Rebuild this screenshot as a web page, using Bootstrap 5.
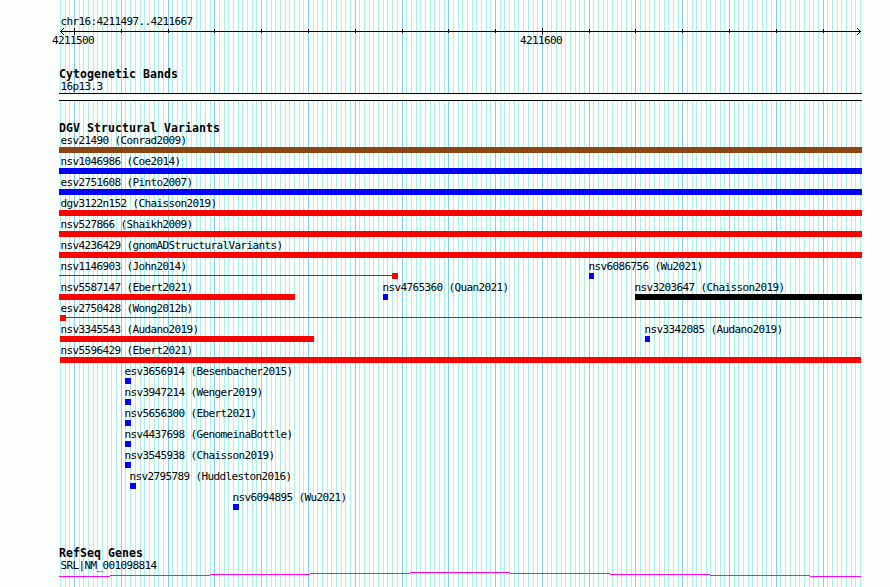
<!DOCTYPE html>
<html lang="en">
<head>
  <meta charset="UTF-8">
  <meta name="viewport" content="width=device-width, initial-scale=1">
  <title>chr16:4211497..4211667</title>
  <link href="https://cdn.jsdelivr.net/npm/bootstrap@5.3.3/dist/css/bootstrap.min.css" rel="stylesheet">
  <style>
    body {
      background-color: #fcfefc;
      color: #000;
      font-family: "DejaVu Sans Mono", monospace;
      font-size: 11px;
      line-height: 12px;
      letter-spacing: -0.622px;
    }

    .browser {
      width: 890px;
      height: 587px;
      padding-left: 59px;
    }

    .panel {
      width: 803px;
    }

    .grid-lines {
      z-index: 0;
    }

    .region {
      height: 28px;
      padding: 16px 0 0 1.4px;
    }

    .ruler {
      height: 41px;
    }

    .track-title {
      margin-bottom: 1px;
      font-size: 11.5px;
      font-weight: bold;
      line-height: 11px;
      letter-spacing: 0.077px;
    }

    .track-label {
      padding-left: 1.4px;
    }

    .cyto-band {
      height: 8px;
      margin-bottom: 22px;
      background-color: #fcfefc;
      border: solid #000;
      border-width: 1px 0;
    }

    .lane {
      height: 21px;
    }

    .feature {
      top: 0;
    }

    .feature-name {
      text-indent: 0.4px;
    }

    .feature-bar {
      height: 6px;
    }

    .gap-line {
      top: 14px;
      height: 1px;
      background-color: #f00;
    }

    .genes {
      margin-top: 35px;
    }

    .gene-line {
      margin-top: -1px;
    }
  </style>
</head>
<body>

  <div class="browser position-relative overflow-hidden">
    <svg class="grid-lines position-absolute top-0 start-0" id="grid" width="890" height="587" shape-rendering="crispEdges"></svg>

    <div class="panel position-relative">
      <div class="region text-nowrap">chr16:4211497..4211667</div>
      <svg class="ruler d-block overflow-visible" id="ruler" width="803" height="41" shape-rendering="crispEdges"></svg>

      <!-- Cytogenetic bands -->
      <div class="track-title">Cytogenetic Bands</div>
      <div class="track-label">16p13.3</div>
      <div class="cyto-band"></div>

      <!-- Structural variants -->
      <div class="track-title">DGV Structural Variants</div>
      <div id="variants"></div>

      <!-- Genes -->
      <div class="genes">
        <div class="track-title">RefSeq Genes</div>
        <div class="track-label">SRL|NM_001098814</div>
        <svg class="gene-line d-block" width="803" height="16" shape-rendering="crispEdges">
          <path fill="#f0f" d="M0 5h51v1H0zM51 4h100v1H51zM151 3h100v1H151zM251 2h100v1H251zM351 1h100v1H351zM451 2h100v1H451zM551 3h100v1H551zM651 4h100v1H651zM751 5h51v1H751z"/>
        </svg>
      </div>
    </div>
  </div>

  <script>
    const start = 4211497;
    const scale = 800 / 171;

    // one entry per lane; x, w are measured from the panel's left edge
    const lanes = [
      [{ name: 'esv21490 (Conrad2009)', x: 0, w: 803, color: '#8b4513' }],
      [{ name: 'nsv1046986 (Coe2014)', x: 0, w: 803, color: '#00f' }],
      [{ name: 'esv2751608 (Pinto2007)', x: 0, w: 803, color: '#00f' }],
      [{ name: 'dgv3122n152 (Chaisson2019)', x: 0, w: 803, color: '#f00' }],
      [{ name: 'nsv527866 (Shaikh2009)', x: 0, w: 803, color: '#f00' }],
      [{ name: 'nsv4236429 (gnomADStructuralVariants)', x: 0, w: 803, color: '#f00' }],
      [{ name: 'nsv1146903 (John2014)', x: 333, w: 6, label: 1, line: [0, 333], color: '#f00' },
       { name: 'nsv6086756 (Wu2021)', x: 530, w: 5, label: 529, color: '#00f' }],
      [{ name: 'nsv5587147 (Ebert2021)', x: 0, w: 236, color: '#f00' },
       { name: 'nsv4765360 (Quan2021)', x: 324, w: 5, label: 323, color: '#00f' },
       { name: 'nsv3203647 (Chaisson2019)', x: 576, w: 227, label: 575, color: '#000' }],
      [{ name: 'esv2750428 (Wong2012b)', x: 1, w: 6, label: 1, line: [7, 796], color: '#f00' }],
      [{ name: 'nsv3345543 (Audano2019)', x: 1, w: 254, label: 1, color: '#f00' },
       { name: 'nsv3342085 (Audano2019)', x: 586, w: 5, label: 585, color: '#00f' }],
      [{ name: 'nsv5596429 (Ebert2021)', x: 1, w: 801, label: 1, color: '#f00' }],
      [{ name: 'esv3656914 (Besenbacher2015)', x: 66, w: 6, label: 65, color: '#00f' }],
      [{ name: 'nsv3947214 (Wenger2019)', x: 66, w: 6, label: 65, color: '#00f' }],
      [{ name: 'nsv5656300 (Ebert2021)', x: 66, w: 6, label: 65, color: '#00f' }],
      [{ name: 'nsv4437698 (GenomeinaBottle)', x: 66, w: 6, label: 65, color: '#00f' }],
      [{ name: 'nsv3545938 (Chaisson2019)', x: 66, w: 6, label: 65, color: '#00f' }],
      [{ name: 'nsv2795789 (Huddleston2016)', x: 71, w: 6, label: 70, color: '#00f' }],
      [{ name: 'nsv6094895 (Wu2021)', x: 174, w: 6, label: 173, color: '#00f' }]
    ];

    function drawGrid() {
      let lines = '';
      for (let i = 0; i <= 171; i++) {
        const x = Math.round(60 + i * scale);
        const color = (start + i) % 10 === 0 ? '#84ceec' : '#acf0ec';
        lines += `<rect x="${x}" y="0" width="1" height="587" fill="${color}"/>`;
      }
      document.getElementById('grid').innerHTML = lines;
    }

    function drawRuler() {
      let marks = '<path d="M1 3h801v1H1z"/>';
      // arrow heads
      for (let k = 1; k < 4; k++) {
        marks += `<path d="M${1 + k} ${3 - k}h1v1h-1zM${1 + k} ${3 + k}h1v1h-1zM${801 - k} ${3 - k}h1v1h-1zM${801 - k} ${3 + k}h1v1h-1z"/>`;
      }
      for (let i = 3; i <= 171; i += 10) {
        const x = Math.round(60 + i * scale) - 59;
        const major = (start + i) % 100 === 0;
        marks += `<rect x="${x}" y="${major ? 0 : 1}" width="1" height="${major ? 7 : 4}"/>`;
        if (major) {
          marks += `<text x="${x - 22}" y="16">${start + i}</text>`;
        }
      }
      document.getElementById('ruler').innerHTML = marks;
    }

    function drawVariants() {
      document.getElementById('variants').innerHTML = lanes.map(lane => {
        const items = lane.map(f => {
          const label = f.label === undefined ? 1 : f.label;
          const line = f.line ? `<div class="gap-line position-absolute" style="left:${f.line[0]}px;width:${f.line[1]}px"></div>` : '';
          return `${line}
            <div class="feature position-absolute start-0 text-nowrap">
              <div class="feature-name" style="margin-left:${label}px">${f.name}</div>
              <div class="feature-bar" style="margin-left:${f.x}px;width:${f.w}px;background-color:${f.color}"></div>
            </div>`;
        }).join('');
        return `<div class="lane position-relative">${items}</div>`;
      }).join('');
    }

    drawGrid();
    drawRuler();
    drawVariants();
  </script>

  <script src="https://cdn.jsdelivr.net/npm/bootstrap@5.3.3/dist/js/bootstrap.bundle.min.js"></script>
</body>
</html>
